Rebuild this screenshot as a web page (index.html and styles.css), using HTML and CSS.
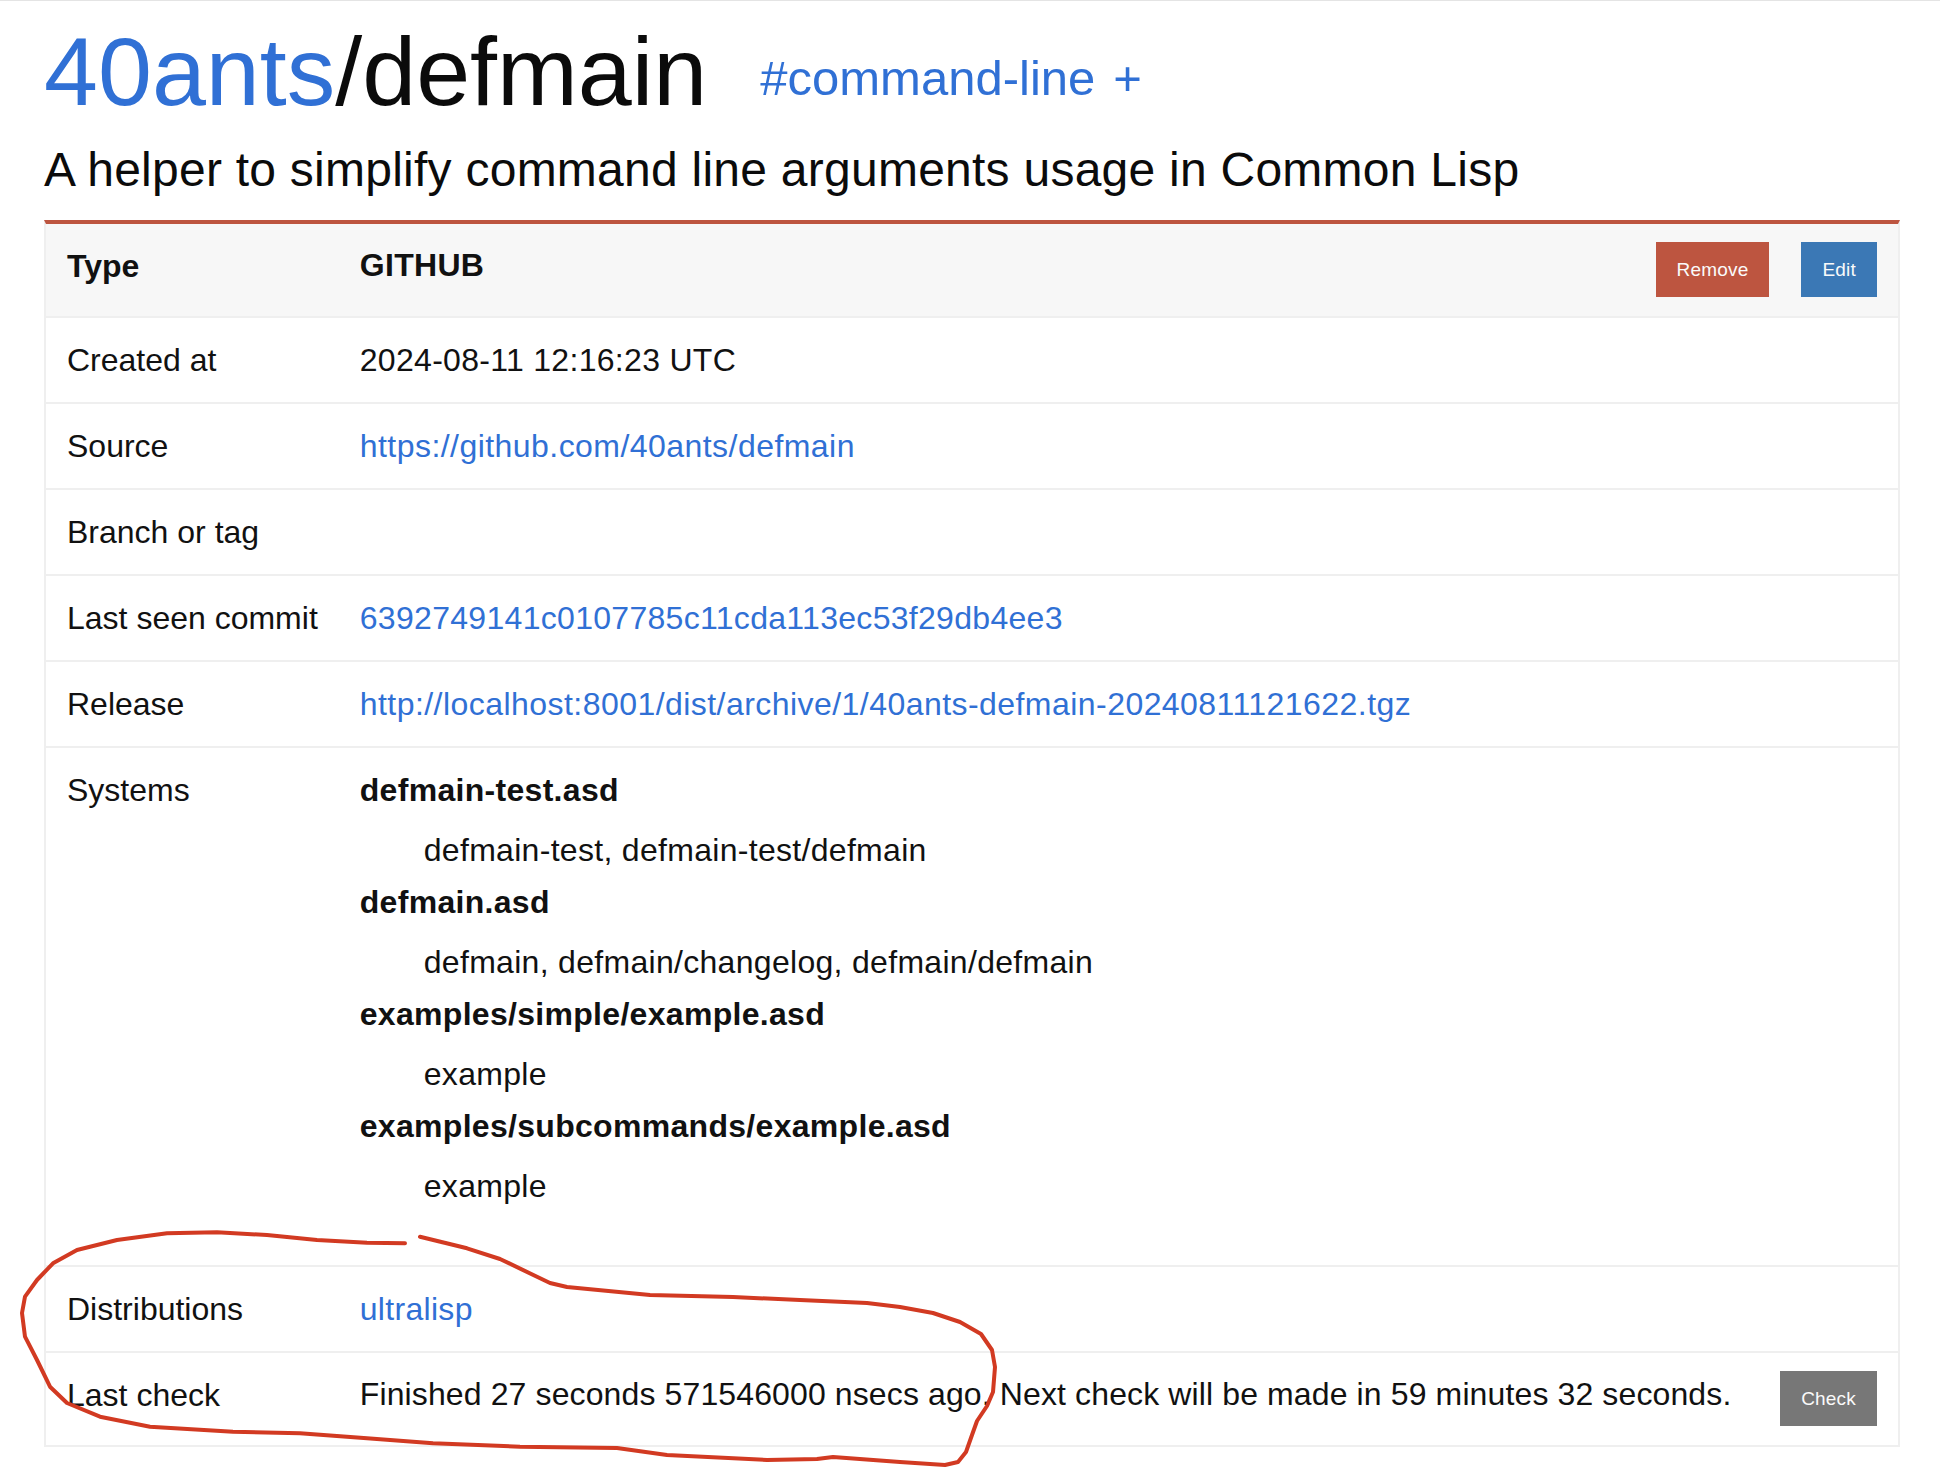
FILE: index.html
```html
<!DOCTYPE html>
<html lang="en">
<head>
<meta charset="utf-8">
<title>40ants/defmain</title>
<link rel="stylesheet" href="styles.css">
</head>
<body>
<div class="page">
  <header class="project-head">
    <h1 class="project-title"><a class="owner" href="#">40ants</a>/defmain</h1>
    <div class="tags"><a class="tag" href="#">#command-line</a><a class="tag tag-add" href="#">+</a></div>
  </header>
  <p class="description">A helper to simplify command line arguments usage in Common Lisp</p>

  <table class="details">
    <tbody>
      <tr class="row-head">
        <td class="label">Type</td>
        <td class="value value-action">
          <div class="value-line">
            <span>GITHUB</span>
            <div class="actions">
              <button class="btn btn-remove" type="button">Remove</button>
              <button class="btn btn-edit" type="button">Edit</button>
            </div>
          </div>
        </td>
      </tr>
      <tr>
        <td class="label">Created at</td>
        <td class="value">2024-08-11 12:16:23 UTC</td>
      </tr>
      <tr>
        <td class="label">Source</td>
        <td class="value"><a class="url" href="#">https://github.com/40ants/defmain</a></td>
      </tr>
      <tr>
        <td class="label">Branch or tag</td>
        <td class="value"></td>
      </tr>
      <tr>
        <td class="label">Last seen commit</td>
        <td class="value"><a href="#">6392749141c0107785c11cda113ec53f29db4ee3</a></td>
      </tr>
      <tr>
        <td class="label">Release</td>
        <td class="value"><a class="url" href="#">http://localhost:8001/dist/archive/1/40ants-defmain-20240811121622.tgz</a></td>
      </tr>
      <tr>
        <td class="label">Systems</td>
        <td class="value">
          <dl class="systems">
            <dt>defmain-test.asd</dt>
            <dd>defmain-test, defmain-test/defmain</dd>
            <dt>defmain.asd</dt>
            <dd>defmain, defmain/changelog, defmain/defmain</dd>
            <dt>examples/simple/example.asd</dt>
            <dd>example</dd>
            <dt>examples/subcommands/example.asd</dt>
            <dd>example</dd>
          </dl>
        </td>
      </tr>
      <tr>
        <td class="label">Distributions</td>
        <td class="value"><a href="#">ultralisp</a></td>
      </tr>
      <tr>
        <td class="label">Last check</td>
        <td class="value value-action">
          <div class="value-line">
            <span class="status-text">Finished 27 seconds 571546000 nsecs ago. Next check will be made in 59 minutes 32 seconds.</span>
            <div class="actions">
              <button class="btn btn-check" type="button">Check</button>
            </div>
          </div>
        </td>
      </tr>
    </tbody>
  </table>

  <svg class="annotation" viewBox="0 0 1940 1470" aria-hidden="true">
    <path d="M405 1243.3 L367 1242.7 L317 1240 L267 1235 L217 1232.3 L167 1233.3 L117 1240 L77 1250 L53 1263.3 L37 1280 L25 1296.7 L22 1313 L25 1336.7 L37 1360 L50 1386.7 L67 1403 L100 1416.7 L150 1426.7 L233 1431.7 L300 1433.3 L367 1438.3 L433 1443.3 L520 1446.7 L617 1448 L667 1455 L767 1460 L817 1459 L833 1457 L900 1462 L945 1465 L958 1462 L966 1452 L972 1435 L977 1421 L987 1406 L993 1392 L995 1367 L992 1350 L981 1334 L960 1322 L933 1313 L900 1307 L867 1303 L800 1300 L733 1297 L650 1295 L567 1287 L550 1283 L500 1259 L467 1248.3 L420 1236.7"/>
  </svg>
</div>
</body>
</html>
```

FILE: styles.css
```css
* {
  box-sizing: border-box;
}

html,
body {
  background: #ffffff;
}

body {
  margin: 0;
  border-top: 1px solid #e4e4e4;
  font-family: "Liberation Sans", Arial, Helvetica, sans-serif;
  color: #111111;
}

a {
  color: #3070d5;
  text-decoration: none;
}

.page {
  position: relative;
  min-height: 1471px;
  padding: 22px 40px 0 44px;
}

/* ---------- heading ---------- */

.project-head {
  display: flex;
  align-items: flex-start;
}

.project-title {
  margin: 0;
  font-size: 97px;
  line-height: 97px;
  font-weight: normal;
  color: #0b0b0b;
  white-space: nowrap;
}

.tags {
  margin: 31px 0 0 53px;
  font-size: 49px;
  line-height: 49px;
  white-space: nowrap;
}

.tag-add {
  margin-left: 18px;
}

.description {
  margin: 22px 0 0;
  font-size: 48px;
  line-height: 56px;
  letter-spacing: 0.25px;
  color: #0b0b0b;
}

/* ---------- details table ---------- */

.details {
  width: 100%;
  margin-top: 22px;
  border-collapse: separate;
  border-spacing: 0;
  border: 2px solid #efefef;
  border-top: 4px solid #bd5540;
  font-size: 32px;
  line-height: 36px;
}

.details td {
  padding: 24px 21px;
  vertical-align: top;
  text-align: left;
  border-bottom: 2px solid #efefef;
}

.details tr:last-child td {
  border-bottom: 0;
}

.details td.value-action {
  padding: 18px 21px 19px;
}

.label {
  width: 1%;
  white-space: nowrap;
}

.value {
  letter-spacing: 0.3px;
}

.url {
  letter-spacing: 0.45px;
}

.status-text {
  letter-spacing: 0.12px;
}

.row-head td {
  background: #f7f7f7;
  font-weight: bold;
}

.value-line {
  display: flex;
  align-items: baseline;
  justify-content: space-between;
  gap: 24px;
}

.actions {
  display: flex;
  align-items: baseline;
  gap: 32px;
}

.btn {
  border: 0;
  margin: 0;
  height: 55px;
  padding: 0 21px;
  font-family: inherit;
  font-size: 19px;
  font-weight: normal;
  line-height: 55px;
  letter-spacing: 0.2px;
  color: #fafafa;
  cursor: pointer;
}

.btn-remove {
  background: #bd5540;
}

.btn-edit {
  background: #3b78b5;
}

.btn-check {
  background: #777777;
}

/* ---------- systems list ---------- */

.systems {
  margin: 0 0 37px;
}

.systems dt {
  margin: 0;
  font-weight: bold;
}

.systems dd {
  margin: 24px 0 16px 64px;
}

/* ---------- hand-drawn annotation ---------- */

.annotation {
  position: absolute;
  left: 0;
  top: -1px;
  width: 1940px;
  height: 1470px;
  pointer-events: none;
  fill: none;
  stroke: #d23a22;
  stroke-width: 4;
  stroke-linecap: round;
  stroke-linejoin: round;
}
```
